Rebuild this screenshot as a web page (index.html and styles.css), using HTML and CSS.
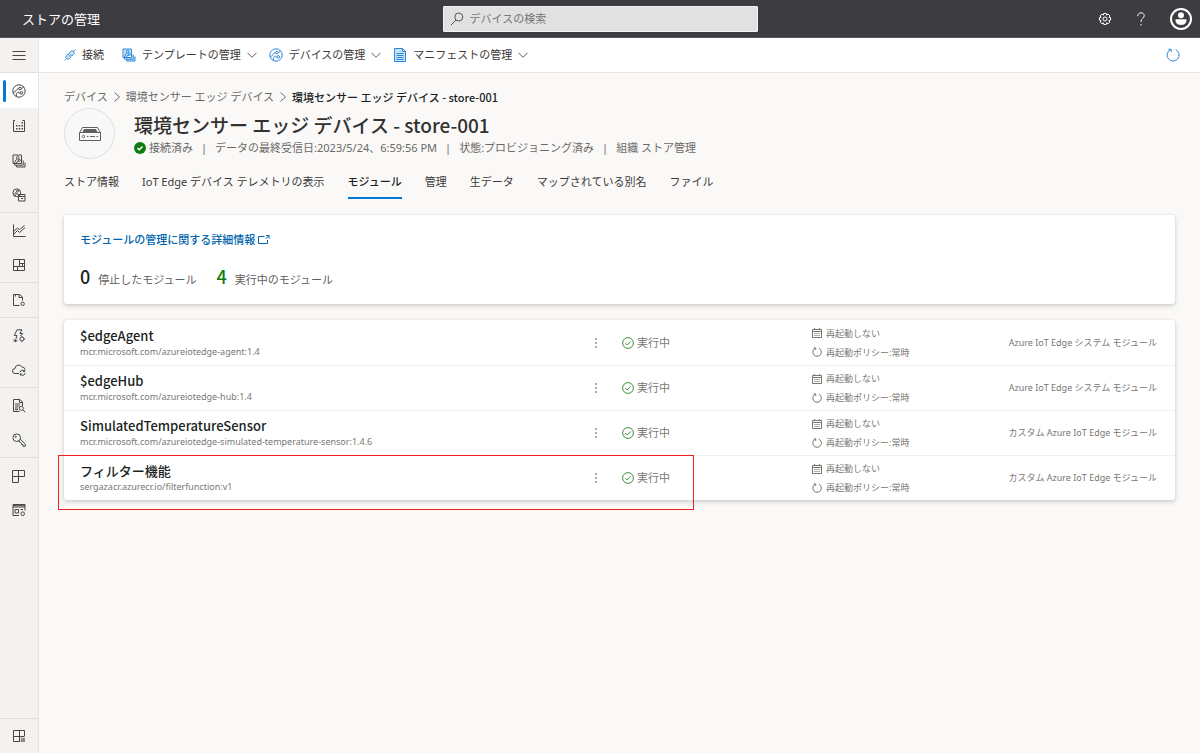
FILE: index.html
```html
<!DOCTYPE html>
<html lang="ja">
<head>
<meta charset="utf-8">
<meta name="viewport" content="width=device-width, initial-scale=1">
<title>ストアの管理</title>
<link rel="stylesheet" href="styles.css">
</head>
<body>
<svg class="sprite" aria-hidden="true">
  <symbol id="i-device" viewBox="0 0 14 14"><circle cx="7" cy="7" r="6.200"/><circle cx="8" cy="4.500" r="1.300"/><circle cx="9.300" cy="8.900" r="1.300"/><path d="M1.200 8.800C3.500 9 3.800 4.800 6.700 4.600M4.300 12.400C4.200 9.500 5.300 7.600 6.400 8.200S7.200 9.800 8 9.300M9.300 4.500C10.500 4.500 11 3.500 11.300 2.600"/></symbol>
  <symbol id="i-template" viewBox="0 0 14 14"><path d="M1 1h8.500v8.500H1zM2.700 9.500v1.700h8.500V6.500M4.700 11.200V13H13V8.500M2 8.700C3.500 8.500 3.500 5.500 4.700 5.300M4.500 9.300C4.500 7.500 6 6.500 7 7.500"/><circle cx="5.700" cy="3.700" r="1.300"/><circle cx="7.400" cy="6.300" r="1"/></symbol>
  <symbol id="i-chevron" viewBox="0 0 10 10"><path d="M.5 2.800 5 7.300l4.500-4.500"/></symbol>
  <symbol id="i-next" viewBox="0 0 8 10"><path d="M1.500.5 6.500 5 1.500 9.500"/></symbol>
  <symbol id="i-check" viewBox="0 0 12 12"><circle cx="6" cy="6" r="5.400"/><path d="M3.400 6.200 5.200 8l3.500-3.600"/></symbol>
  <symbol id="i-calendar" viewBox="0 0 10 10"><path d="M.5 1.500h9v8h-9zM.5 3.500h9M2.500 0v2M7.500 0v2"/><path class="soft" d="M2 5.500h6M2 7.500h6"/></symbol>
  <symbol id="i-refresh" viewBox="0 0 14 14"><path d="M4.600 1.600A6 6 0 1 0 9.600 1.600M2.400 1.300h2.800v2.800"/></symbol>
  <symbol id="i-more" viewBox="0 0 4 12"><path class="solid" d="M1.200 1.200h1.600v1.600H1.200zM1.200 5.200h1.600v1.600H1.200zM1.200 9.200h1.600v1.600H1.200z"/></symbol>
</svg>

<header class="topbar">
  <span class="brand">ストアの管理</span>
  <label class="search">
    <svg class="icon14" viewBox="0 0 14 14"><circle cx="8.800" cy="5" r="4"/><path d="M6 8 .8 13.200"/></svg>
    <input type="search" placeholder="デバイスの検索" aria-label="デバイスの検索">
  </label>
  <div class="top-actions">
    <button type="button" aria-label="設定"><svg class="icon14" viewBox="0 0 14 14"><path d="M5.800 1.400h2.400l.4 1.700 1.500-1 1.700 1.700-.9 1.500 1.700.4v2.400l-1.700.4.900 1.500-1.700 1.700-1.500-.9-.4 1.700H5.800l-.4-1.700-1.500.9-1.700-1.700.9-1.500-1.700-.4V5.700l1.700-.4-.9-1.500 1.700-1.700 1.500 1z"/><circle cx="7" cy="7" r="2"/></svg></button>
    <button type="button" aria-label="ヘルプ"><svg class="icon14" viewBox="0 0 14 14"><path d="M3.800 4.200C3.800 2 5.200.8 7 .8s3.200 1.200 3.200 2.900C10.200 6.500 7 6.500 7 9.500v.6M7 12v1.500"/></svg></button>
    <button type="button" aria-label="アカウント"><svg class="icon22" viewBox="0 0 22 22"><circle class="ring" cx="11" cy="11" r="10"/><circle class="solid" cx="11" cy="7.200" r="3"/><path class="solid" d="M5.500 11.300h11v1c0 3-2.200 4.700-5.500 4.700s-5.500-1.700-5.500-4.700z"/></svg></button>
  </div>
</header>

<div class="shell">
  <nav class="sidebar" aria-label="メイン">
    <div class="group"><button type="button" class="nav-item" aria-label="メニュー"><svg class="icon14" viewBox="0 0 14 14"><path d="M.5 3.500h13M.5 7.500h13M.5 11.500h13"/></svg></button></div>
    <div class="group">
      <a href="#" class="nav-item active" aria-label="デバイス"><svg class="icon14"><use href="#i-device"/></svg></a>
      <a href="#" class="nav-item" aria-label="デバイス グループ"><svg class="icon14" viewBox="0 0 14 14"><path d="M3 1.500H1.500v11h11V1.500h-2"/><path class="solid" d="M4 9h1.500v1.500H4zM6.700 9h1.500v1.500H6.700zM9.500 9H11v1.500H9.500zM4 6h1.500v1.500H4zM9.500 6H11v1.500H9.500zM6.700 6h1.500v1.500H6.700zM9.500 3H11v1.500H9.500z"/></svg></a>
      <a href="#" class="nav-item" aria-label="デバイス テンプレート"><svg class="icon14"><use href="#i-template"/></svg></a>
      <a href="#" class="nav-item" aria-label="エッジ マニフェスト"><svg class="icon14" viewBox="0 0 14 14"><circle cx="4.800" cy="4.800" r="3.900"/><circle cx="5.500" cy="3.200" r="1"/><path d="M1.500 6.500 4.500 4M3 8.300 4.500 5.500 6.500 6.500M6.500 6.500h6.500V13H6.500zM6.500 8.500H13M9 10.500h2"/></svg></a>
    </div>
    <div class="group">
      <a href="#" class="nav-item" aria-label="データ エクスプローラー"><svg class="icon14" viewBox="0 0 14 14"><path d="M1.500.5v12h12M1.500 10.500l4-4 2 2L13 3.500M1.500 7.500l4-3.500 2 1.500L12.500 1.500"/></svg></a>
      <a href="#" class="nav-item" aria-label="ダッシュボード"><svg class="icon14" viewBox="0 0 14 14"><path d="M1.500 1.500h11v11h-11zM7.500 1.500v7M1.500 8.500h11M7.500 5.500h5M10.500 5.500v3M5.500 8.500v4"/></svg></a>
    </div>
    <div class="group"><a href="#" class="nav-item" aria-label="ジョブ"><svg class="icon14" viewBox="0 0 14 14"><path d="M7.500 12.500h-6v-11h6L10.500 4v3.500M7 1.500V4.500h3.500M3.500 1.500v2"/><circle cx="10.600" cy="10.800" r="1.700"/></svg></a></div>
    <div class="group">
      <a href="#" class="nav-item" aria-label="ルール"><svg class="icon14" viewBox="0 0 14 14"><path d="M5 .8h5L7.800 4.500h3L8.300 7M5 .8 2.300 6.500h2.700L3 12.800M3 12.800 1.500 10.500M3 12.800 5.500 11.500"/><circle cx="9.900" cy="10" r="2"/><path d="M9.900 7v1M9.900 12v1.200M12 10h1.200"/></svg></a>
      <a href="#" class="nav-item" aria-label="データのエクスポート"><svg class="icon14" viewBox="0 0 14 14"><path d="M7 10.500H3A2.500 2.500 0 0 1 3 5.500 3.600 3.600 0 0 1 9.800 4 3 3 0 0 1 13 6.500M8 9.500a2.500 2.500 0 0 1 4.700-1V6.800M12.700 8.500H11M13 10a2.500 2.500 0 0 1-4.700 1v1.500M8.300 11H10"/></svg></a>
    </div>
    <div class="group">
      <a href="#" class="nav-item" aria-label="監査ログ"><svg class="icon14" viewBox="0 0 14 14"><path d="M7.500 12.500h-6v-12H8L10.500 3v4M7.500.5v3h3M3 5h5M3 7h4.500M3 9h3M3 10.700h3"/><circle cx="9.300" cy="9.300" r="2"/><path d="M10.800 10.800 13.300 13.300"/></svg></a>
      <a href="#" class="nav-item" aria-label="アクセス許可"><svg class="icon14" viewBox="0 0 14 14"><circle cx="4.700" cy="4.700" r="3.800"/><circle cx="3.700" cy="3.700" r=".6"/><path d="M8.200 6 13.300 11v2.200H11v-1.500H9.700v-1.400L6.400 8"/></svg></a>
    </div>
    <div class="group last">
      <a href="#" class="nav-item" aria-label="アプリケーション"><svg class="icon14" viewBox="0 0 14 14"><path d="M.5 1.500h12v6H.5zM.5 7.500v6h6v-12"/></svg></a>
      <a href="#" class="nav-item" aria-label="カスタマイズ"><svg class="icon14" viewBox="0 0 14 14"><path d="M7 12.500H1v-11h12v6M1 4h12M1 2.700h12M3 6.500h3.500v3.500H3zM8.500 6.500H11"/><circle cx="10.700" cy="10.700" r="1.800"/></svg></a>
    </div>
    <div class="group bottom"><a href="#" class="nav-item" aria-label="ポータル"><svg class="icon14" viewBox="0 0 14 14"><path d="M8 12.500H1.500v-11h11V7M1.500 7.500h11M7.500 1.500v11"/><path class="solid soft" d="M8.800 8.800H13V13H8.800z"/></svg></a></div>
  </nav>

  <div class="content">
    <div class="toolbar">
      <button type="button"><svg class="icon12 blue tint" viewBox="0 0 14 14"><path d="M.5 13.500 3 11M11 3l2.500-2.500M5.800 4.800 7.800 2.800a2.300 2.300 0 0 1 3.400 3.400L9.200 8.200zM4.800 5.800 2.800 7.800a2.300 2.300 0 0 0 3.400 3.400l2-2z"/></svg><span>接続</span></button>
      <button type="button"><svg class="icon14 blue tint"><use href="#i-template"/></svg><span>テンプレートの管理</span><svg class="icon10"><use href="#i-chevron"/></svg></button>
      <button type="button"><svg class="icon14 blue"><use href="#i-device"/></svg><span>デバイスの管理</span><svg class="icon10"><use href="#i-chevron"/></svg></button>
      <button type="button"><svg class="icon14 blue tint" viewBox="0 0 14 14"><path d="M1.500.5h8l3 3v10h-11zM9.500.5v3h3"/><path d="M3.500 5.500h7M3.500 7.500h7M3.500 9.500h7M3.500 11.500h7"/></svg><span>マニフェストの管理</span><svg class="icon10"><use href="#i-chevron"/></svg></button>
      <button type="button" class="refresh" aria-label="最新の情報に更新"><svg class="icon14 blue"><use href="#i-refresh"/></svg></button>
    </div>

    <main class="page">
      <nav class="crumbs" aria-label="階層リンク">
        <a href="#">デバイス</a><svg class="sep"><use href="#i-next"/></svg>
        <a href="#">環境センサー エッジ デバイス</a><svg class="sep"><use href="#i-next"/></svg>
        <span class="current">環境センサー エッジ デバイス - store-001</span>
      </nav>

      <section class="device">
        <div class="avatar"><svg viewBox="0 0 24 16"><path d="M1.500 6.500h21v8h-21zM1.500 7 4.500 1.500h15L22.500 7"/><path class="solid" d="M6 3h12l1.500 3.200h-15z"/><circle cx="5.500" cy="10.500" r="1.100"/><path d="M9 10.500h1.500M12 10.500h5M18.500 10.500H20"/></svg></div>
        <div class="device-text">
          <h1>環境センサー エッジ デバイス - store-001</h1>
          <div class="status-line">
            <span class="connected"><svg viewBox="0 0 12 12"><circle class="badge" cx="6" cy="6" r="6"/><path d="M3.600 6.100 5.300 7.800 8.500 4.500"/></svg>接続済み</span>
            <span>|</span><span>データの最終受信日:2023/5/24、6:59:56 PM</span>
            <span>|</span><span>状態:プロビジョニング済み</span>
            <span>|</span><span>組織 ストア管理</span>
          </div>
        </div>
      </section>

      <nav class="tabs" aria-label="デバイスのビュー">
        <a href="#">ストア情報</a>
        <a href="#">IoT Edge デバイス テレメトリの表示</a>
        <a href="#" class="selected" aria-current="page">モジュール</a>
        <a href="#">管理</a>
        <a href="#">生データ</a>
        <a href="#">マップされている別名</a>
        <a href="#">ファイル</a>
      </nav>

      <section class="card summary">
        <a href="#" class="learn">モジュールの管理に関する詳細情報<svg viewBox="0 0 12 10"><path d="M6.500 1.500h-6v7h9V5M8 .5h3v3M11 .5 7.800 3.800"/></svg></a>
        <div class="counts">
          <span class="count">0</span><span>停止したモジュール</span>
          <span class="count ok">4</span><span>実行中のモジュール</span>
        </div>
      </section>

      <section class="card modules">
        <table>
          <colgroup><col><col class="c-more"><col class="c-status"><col class="c-restart"><col class="c-type"></colgroup>
          <tbody>
            <tr>
              <td class="name"><strong>$edgeAgent</strong><small>mcr.microsoft.com/azureiotedge-agent:1.4</small></td>
              <td class="more"><button type="button" aria-label="その他"><svg><use href="#i-more"/></svg></button></td>
              <td class="state"><span><svg class="icon12"><use href="#i-check"/></svg>実行中</span></td>
              <td class="restart"><span><svg class="icon10"><use href="#i-calendar"/></svg>再起動しない</span><span><svg class="icon10 policy"><use href="#i-refresh"/></svg>再起動ポリシー:常時</span></td>
              <td class="type">Azure IoT Edge システム モジュール</td>
            </tr>
            <tr>
              <td class="name"><strong>$edgeHub</strong><small>mcr.microsoft.com/azureiotedge-hub:1.4</small></td>
              <td class="more"><button type="button" aria-label="その他"><svg><use href="#i-more"/></svg></button></td>
              <td class="state"><span><svg class="icon12"><use href="#i-check"/></svg>実行中</span></td>
              <td class="restart"><span><svg class="icon10"><use href="#i-calendar"/></svg>再起動しない</span><span><svg class="icon10 policy"><use href="#i-refresh"/></svg>再起動ポリシー:常時</span></td>
              <td class="type">Azure IoT Edge システム モジュール</td>
            </tr>
            <tr>
              <td class="name"><strong>SimulatedTemperatureSensor</strong><small>mcr.microsoft.com/azureiotedge-simulated-temperature-sensor:1.4.6</small></td>
              <td class="more"><button type="button" aria-label="その他"><svg><use href="#i-more"/></svg></button></td>
              <td class="state"><span><svg class="icon12"><use href="#i-check"/></svg>実行中</span></td>
              <td class="restart"><span><svg class="icon10"><use href="#i-calendar"/></svg>再起動しない</span><span><svg class="icon10 policy"><use href="#i-refresh"/></svg>再起動ポリシー:常時</span></td>
              <td class="type">カスタム Azure IoT Edge モジュール</td>
            </tr>
            <tr>
              <td class="name"><strong>フィルター機能</strong><small>sergazacr.azurecr.io/filterfunction:v1</small></td>
              <td class="more"><button type="button" aria-label="その他"><svg><use href="#i-more"/></svg></button></td>
              <td class="state"><span><svg class="icon12"><use href="#i-check"/></svg>実行中</span></td>
              <td class="restart"><span><svg class="icon10"><use href="#i-calendar"/></svg>再起動しない</span><span><svg class="icon10 policy"><use href="#i-refresh"/></svg>再起動ポリシー:常時</span></td>
              <td class="type">カスタム Azure IoT Edge モジュール</td>
            </tr>
          </tbody>
        </table>
        <div class="callout"></div>
      </section>
    </main>
  </div>
</div>
</body>
</html>
```
FILE: styles.css
```css
* { box-sizing: border-box; }

body {
  margin: 0;
  min-height: 100vh;
  display: flex;
  flex-direction: column;
  background: #faf9f8;
  color: #3b3a39;
  font: 11px/16px "Noto Sans", "Noto Sans CJK JP", sans-serif;
}

a { color: inherit; text-decoration: none; }
button { border: 0; padding: 0; background: none; color: inherit; font: inherit; cursor: pointer; }
svg { fill: none; stroke: currentColor; stroke-width: 1; flex: none; display: block; }
.solid { fill: currentColor; stroke: none; }
.soft { opacity: .6; }
.sprite { position: absolute; width: 0; height: 0; }
.icon10 { width: 10px; height: 10px; }
.icon12 { width: 12px; height: 12px; }
.icon14 { width: 14px; height: 14px; }
.icon22 { width: 22px; height: 22px; }
.ring { stroke-width: 2; }
.blue { color: #2b88d8; }
.tint { fill: #c7e0f4; }

/* Top bar */
.topbar {
  display: grid;
  grid-template-columns: 1fr 315px 1fr;
  align-items: center;
  height: 38px;
  padding: 0 8px 0 22px;
  background: #3d3c41;
  border-bottom: 1px solid #57565b;
  color: #fff;
}
.brand { font-size: 13px; }
.search {
  display: flex;
  align-items: center;
  gap: 6px;
  height: 26px;
  margin-left: -7px;
  width: 315px;
  padding: 0 6px;
  background: #e1e1e1;
  border: 1px solid #f3f3f3;
  border-radius: 1px;
  color: #55545a;
}
.search input { flex: 1; min-width: 0; border: 0; padding: 0; outline: 0; background: none; font: inherit; color: #323130; }
.search input::placeholder { color: #75747a; opacity: 1; }
.top-actions { display: flex; justify-content: flex-end; align-items: center; gap: 22px; }

/* Sidebar */
.shell { flex: 1; display: flex; }
.sidebar {
  flex: none;
  display: flex;
  flex-direction: column;
  width: 39px;
  background: #f3f2f1;
  border-right: 1px solid #e6e5e3;
  color: #484644;
}
.group { display: flex; flex-direction: column; border-bottom: 1px solid #e1dfdd; }
.group.last { border-bottom: 0; }
.group.bottom { margin-top: auto; border-bottom: 0; border-top: 1px solid #e1dfdd; }
.nav-item { display: flex; align-items: center; justify-content: center; height: 35px; width: 100%; }
.nav-item:last-child { height: 34px; }
.nav-item.active { position: relative; background: #fff; }
.nav-item.active::before {
  content: "";
  position: absolute;
  left: 3px;
  top: 7px;
  bottom: 6px;
  width: 3px;
  border-radius: 2px;
  background: #0078d4;
}

/* Toolbar */
.content { flex: 1; min-width: 0; display: flex; flex-direction: column; }
.toolbar {
  display: flex;
  align-items: center;
  gap: 12px;
  height: 35px;
  padding: 0 20px 0 25px;
  background: #fff;
  border-bottom: 1px solid #e9e8e6;
}
.toolbar button { display: flex; align-items: center; gap: 6px; }
.toolbar button:first-child { margin-right: 6px; }
.toolbar .refresh { margin-left: auto; }
.toolbar .icon10 { color: #605e5c; }

/* Page header */
.page { padding: 16px 25px 24px; }
.crumbs { display: flex; align-items: center; gap: 5px; color: #6b6967; }
.crumbs .current { color: #201f1e; font-weight: 500; font-family: "Noto Sans CJK JP", sans-serif; }
.sep { width: 8px; height: 10px; }
.device { display: flex; align-items: center; gap: 19px; margin-top: 3px; }
.avatar {
  display: flex;
  align-items: center;
  justify-content: center;
  width: 51px;
  height: 51px;
  border: 1px solid #e1dfdd;
  border-radius: 50%;
  background: #f8f8f8;
  color: #605e5c;
}
.avatar svg { width: 24px; height: 16px; }
h1 { margin: 0; font-size: 19px; line-height: 28px; font-weight: 500; color: #323130; font-family: "Noto Sans CJK JP", sans-serif; }
.status-line { display: flex; gap: 8px; color: #6b6967; line-height: 18px; }
.connected { display: flex; align-items: center; gap: 3px; }
.connected svg { width: 12px; height: 12px; stroke: #fff; stroke-width: 1.5; }
.badge { fill: #107c10; stroke: none; }

.tabs { display: flex; gap: 23px; margin-top: 11px; }
.tabs a { padding: 4px 0 7px; border-bottom: 2px solid transparent; }
.tabs .selected { font-weight: 500; color: #201f1e; border-color: #0078d4; }

/* Cards */
.card { background: #fff; border-radius: 3px; box-shadow: 0 2px 5px rgba(0, 0, 0, .16), 0 0 2px rgba(0, 0, 0, .1); }
.summary { margin-top: 16px; padding: 16px 16px 12px; }
.learn { display: flex; width: fit-content; align-items: center; gap: 3px; font-weight: 500; color: #0063ad; line-height: 18px; }
.learn svg { width: 12px; height: 10px; }
.counts { display: flex; align-items: baseline; gap: 8px; margin-top: 15px; color: #605e5c; line-height: 24px; }
.count { font-family: "Noto Sans CJK JP", sans-serif; font-size: 18px; font-weight: 500; color: #201f1e; }
.count.ok { margin-left: 12px; color: #107c10; }

.modules { position: relative; margin-top: 16px; }
table { width: 100%; border-collapse: separate; border-spacing: 0; table-layout: fixed; }
.c-more { width: 34px; }
.c-status { width: 190px; }
.c-restart { width: 190px; }
.c-type { width: 173px; }
td { height: 45px; padding: 0; vertical-align: middle; color: #797775; }
tr + tr td { border-top: 1px solid #f1f0ef; }
.name { padding-left: 16px; }
.name strong { display: block; font: 500 13px/18px "Noto Sans CJK JP", sans-serif; color: #201f1e; }
.name small { display: block; font-size: 9px; line-height: 14px; color: #797775; }
.more svg { width: 4px; height: 12px; }
.more button { display: block; padding: 0 6px; }
.state span { display: flex; align-items: center; gap: 3px; }
.state svg { color: #3f8f3f; }
.restart { font-size: 9px; }
.restart span { display: flex; align-items: center; gap: 4px; line-height: 19px; }
.policy { stroke-width: 1.4; }
.type { padding-right: 18px; text-align: right; font-size: 9px; white-space: nowrap; }

.callout {
  position: absolute;
  left: -6px;
  bottom: -10px;
  width: 636px;
  height: 55px;
  border: 1px solid #f02020;
  pointer-events: none;
}
```
